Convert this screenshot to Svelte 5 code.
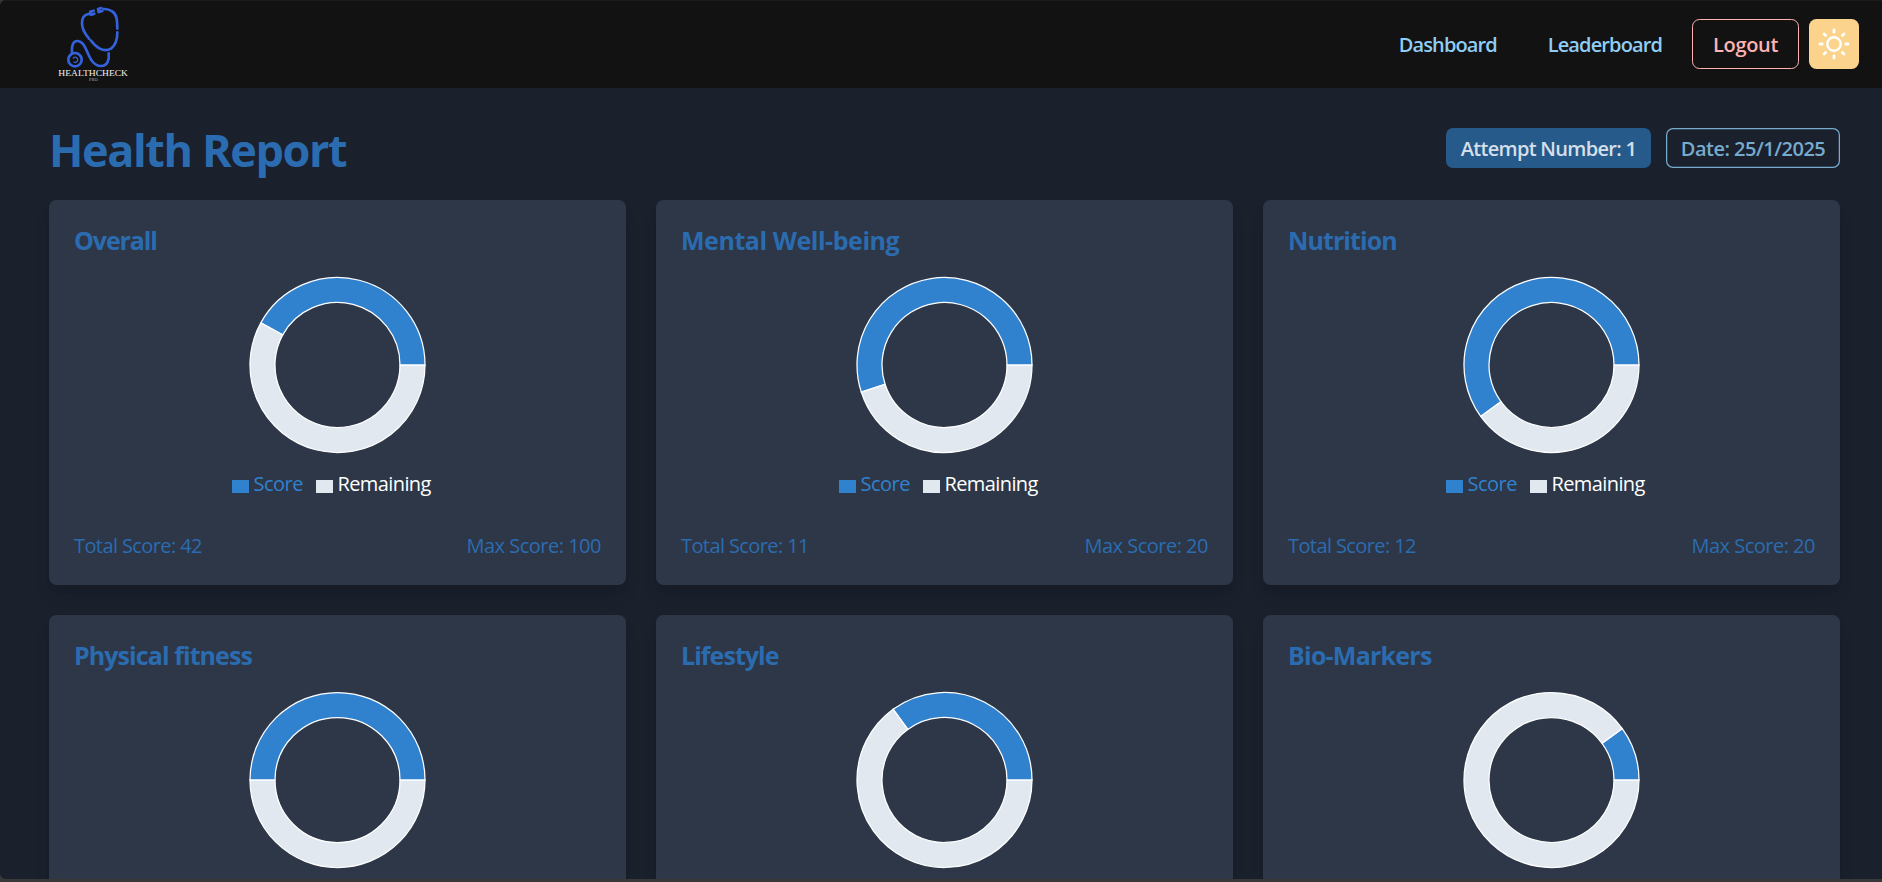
<script>
  const cards = [
    { title: 'Overall', score: 42, max: 100, tracking: -1.1 },
    { title: 'Mental Well-being', score: 11, max: 20, tracking: -0.45 },
    { title: 'Nutrition', score: 12, max: 20, tracking: -0.9 },
    { title: 'Physical fitness', score: 10, max: 20, tracking: -0.92 },
    { title: 'Lifestyle', score: 7, max: 20, tracking: -0.95 },
    { title: 'Bio-Markers', score: 2, max: 20, tracking: -0.77 }
  ];
  // Only the first row is tall enough in the viewport to show its details.
  const detailed = 3;
  const R = 87.5;
  const r = 62.5;
  const point = (radius, turn) => {
    const a = turn * 2 * Math.PI;
    return `${radius * Math.cos(a)} ${-radius * Math.sin(a)}`;
  };
  function sector(from, to) {
    const large = to - from > 0.5 ? 1 : 0;
    return `M${point(R, from)}A${R} ${R} 0 ${large} 0 ${point(R, to)}L${point(r, to)}A${r} ${r} 0 ${large} 1 ${point(r, from)}Z`;
  }
</script>

<div class="window">
  <div class="page">
    <header>
      <svg class="logo" viewBox="0 0 330 270" width="110" height="90">
        <g fill="none" stroke="#3461dc" stroke-width="8" stroke-linecap="round">
          <path d="M146 42C133 44 126 55 126 69C126 88 135 102 147 116" />
          <path d="M190 27C211 26 227 37 230 56Q232 70 232 86" />
          <path d="M232 97C232 119 226 136 214 145C190 160 166 140 152 121" />
          <path d="M96 158C94 137 99 123 112 123C145 123 140 197 183 198C203 198 208 180 206 160" />
          <circle cx="105" cy="179" r="20" />
          <path d="M100 174C106 168 114 174 113 180C112 187 106 189 102 186" stroke-width="4" />
          <path d="M151 35L161 32M155 44L163 41M174 27L184 24M177 36L187 33" stroke-width="8" />
          <path d="M151 36V43M176 28V35" stroke-width="9" />
        </g>
        <text x="55" y="227" textLength="209" lengthAdjust="spacingAndGlyphs" class="brand">HEALTHCHECK</text>
        <text x="147" y="243" textLength="26" lengthAdjust="spacingAndGlyphs" class="pro">PRO</text>
      </svg>
      <nav>
        <a class="dash" href="#dashboard">Dashboard</a>
        <a class="lead" href="#leaderboard">Leaderboard</a>
        <button class="logout">Logout</button>
        <button class="theme" aria-label="Toggle theme">
          <svg viewBox="0 0 32 32" width="32" height="32" fill="none" stroke="#fff" stroke-linecap="round">
            <circle cx="16" cy="16" r="6.7" stroke-width="2.4" />
            <path stroke-width="2.8" d="M16 2V4.2M16 27.8V30M2 16H4.2M27.8 16H30M6.1 6.1L7.6 7.6M24.4 24.4L25.9 25.9M6.1 25.9L7.6 24.4M24.4 7.6L25.9 6.1" />
          </svg>
        </button>
      </nav>
    </header>
    <main>
      <div class="top">
        <h1>Health Report</h1>
        <div class="badges">
          <span class="badge solid">Attempt Number: 1</span>
          <span class="badge outline">Date: 25/1/2025</span>
        </div>
      </div>
      <div class="grid">
        {#each cards as c, i}
          <section>
            <h2 style="letter-spacing: {c.tracking}px">{c.title}</h2>
            <svg class="donut" viewBox="-89.5 -89 179 178" width="179" height="178" stroke="#fff" stroke-width="1.25">
              <path fill="#3182ce" d={sector(0, c.score / c.max)} />
              <path fill="#e2e8f0" d={sector(c.score / c.max, 1)} />
            </svg>
            {#if i < detailed}
              <div class="legend">
                <span class="score"><i></i><b>Score</b></span>
                <span class="rest"><i></i><b>Remaining</b></span>
              </div>
              <div class="stats">
                <span class="total">Total Score: {c.score}</span>
                <span class="max">Max Score: {c.max}</span>
              </div>
            {/if}
          </section>
        {/each}
      </div>
    </main>
  </div>
</div>

<style>
  * { box-sizing: border-box; }
  :global(body) { margin: 0; background: #383838; }
  .window { height: 882px; padding-bottom: 3px; background: #383838; overflow: hidden; }
  .page {
    height: 879px; overflow: hidden; background: #1a202c;
    border-radius: 6px 0 0 6px;
    font-family: "Open Sans", "Noto Sans", sans-serif; font-size: 20px;
  }
  header {
    height: 88px; background: #121212; border-top: 1px solid #1c1c1c;
    display: flex; justify-content: space-between; padding: 0 23px 0 40px;
  }
  .logo { margin-top: -1px; flex: none; }
  .brand { font: 27px "Liberation Serif", serif; fill: #f4f4f4; }
  .pro { font: 14px "Liberation Serif", serif; fill: #aaa; }
  nav { display: flex; align-items: center; height: 86px; font-weight: 600; }
  a { color: #90cdf4; text-decoration: none; white-space: nowrap; padding-top: 1px; }
  .dash { letter-spacing: -0.9px; margin-right: 51px; }
  .lead { letter-spacing: -0.88px; margin-right: 30px; }
  button { font: inherit; height: 50px; border-radius: 7.5px; padding: 0; display: flex; align-items: center; justify-content: center; }
  .logout { width: 107px; border: 1px solid #feb2b2; background: none; color: #feb2b2; margin-right: 10px; letter-spacing: -0.3px; padding-top: 1px; }
  .theme { width: 50px; border: 0; background: #fbd38d; }
  .theme svg { margin-top: -1px; }
  main { padding: 40px 42px 0 49px; }
  .top { display: flex; justify-content: space-between; height: 72px; }
  h1 { margin: -8px 0 0 0; font-size: 45px; line-height: 60px; color: #2b6cb0; letter-spacing: -1.4px; white-space: nowrap; }
  .badges { display: flex; gap: 15px; }
  .badge { height: 40px; border-radius: 7px; line-height: 42px; font-weight: 600; text-align: center; white-space: nowrap; }
  .solid { width: 205px; background: #265a8b; color: #d5dfe9; letter-spacing: -0.7px; }
  .outline { width: 174px; box-shadow: inset 0 0 0 1.25px #77abce; color: #77abce; letter-spacing: -0.5px; }
  .grid { display: grid; grid-template-columns: repeat(3, 577px); gap: 30px; }
  section {
    height: 385px; padding: 25px; border-radius: 7.5px; background: #2d3748;
    box-shadow: 0 12.5px 19px -4px rgba(0,0,0,.1), 0 5px 7.5px -2.5px rgba(0,0,0,.05);
    display: flex; flex-direction: column;
  }
  h2 { margin: 0; font-size: 25px; line-height: 30px; color: #2b6cb0; white-space: nowrap; align-self: flex-start; }
  .donut { display: block; margin: 21px 174px 0; flex: none; }
  .legend { display: flex; justify-content: center; gap: 14px; height: 30px; line-height: 30px; margin-top: 15px; padding-right: 14px; }
  .legend span { display: flex; align-items: center; gap: 5px; }
  .legend i { width: 17px; height: 13px; margin-top: 5px; }
  .legend b { font-weight: 400; white-space: nowrap; }
  .score i { background: #3182ce; }
  .score b { color: #3182ce; width: 48px; letter-spacing: -0.5px; }
  .rest i { background: #e2e8f0; }
  .rest b { color: #fff; width: 92px; letter-spacing: -0.6px; }
  .stats { display: flex; justify-content: space-between; height: 30px; line-height: 30px; margin-top: 32px; color: #2b6cb0; letter-spacing: -0.6px; }
  .max { letter-spacing: -0.5px; }
</style>
